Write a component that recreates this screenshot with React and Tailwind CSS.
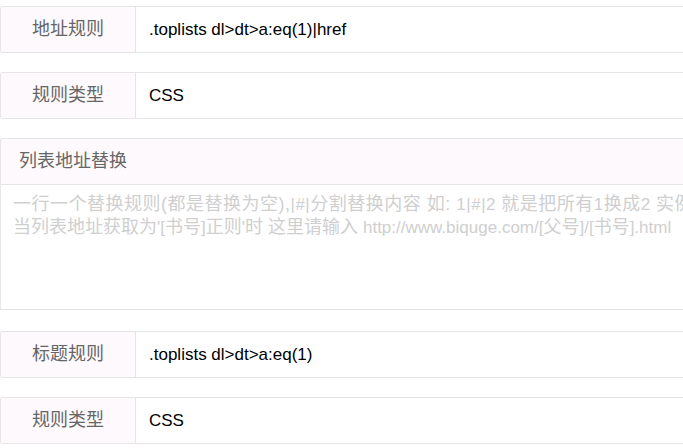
import React from "react";

const font = { fontFamily: '"Liberation Sans", "Noto Sans CJK SC", sans-serif' };

function Row({ label, value, className = "" }) {
  return (
    <div className={`flex h-[47px] w-[820px] border border-[#e6e6e6] rounded-[2px] ${className}`}>
      <div className="w-[135px] shrink-0 flex items-center justify-center bg-[#fdf9fd] border-r border-[#e6e6e6] text-[18px] text-[#666]">
        {label}
      </div>
      <div className="flex-1 flex items-center pl-[13px] text-[17px] text-black bg-white">
        {value}
      </div>
    </div>
  );
}

const Z = ({ children }) => <span className="text-[18px]">{children}</span>;
const L = ({ children }) => <span className="text-[17px]">{children}</span>;

export default function App() {
  return (
    <div className="w-[683px] h-[448px] overflow-hidden bg-white" style={font}>
      <div className="pt-[6px]">
        <Row label="地址规则" value=".toplists dl>dt>a:eq(1)|href" className="mb-[19px]" />
        <Row label="规则类型" value="CSS" className="mb-[19px]" />
        <div className="w-[820px] mb-[21px]">
          <div className="h-[47px] flex items-center pl-[18px] bg-[#fdf9fd] border border-[#e6e6e6] rounded-t-[2px] text-[18px] text-[#666]">
            列表地址替换
          </div>
          <div className="h-[125px] border-x border-b border-[#e6e6e6] bg-white pl-[12px] pt-[8px] text-[#cfcfcf] leading-[22px] whitespace-nowrap">
            <div className="tracking-[0.5px]">
              <Z>一行一个替换规则(都是替换为空),</Z><L>|#|</L><Z>分割替换内容 如: </Z><L>1|#|2 </L><Z>就是把所有</Z><L>1</L><Z>换成</Z><L>2 </L><Z>实例:</Z><L>1|#|2</L>
            </div>
            <div>
              <Z>当列表地址获取为</Z><L>'[</L><Z>书号</Z><L>]</L><Z>正则</Z><L>'</L><Z>时 这里请输入 </Z><L>http://www.biquge.com/[</L><Z>父号</Z><L>]/[</L><Z>书号</Z><L>].html</L>
            </div>
          </div>
        </div>
        <Row label="标题规则" value=".toplists dl>dt>a:eq(1)" className="mb-[19px]" />
        <Row label="规则类型" value="CSS" />
      </div>
    </div>
  );
}
